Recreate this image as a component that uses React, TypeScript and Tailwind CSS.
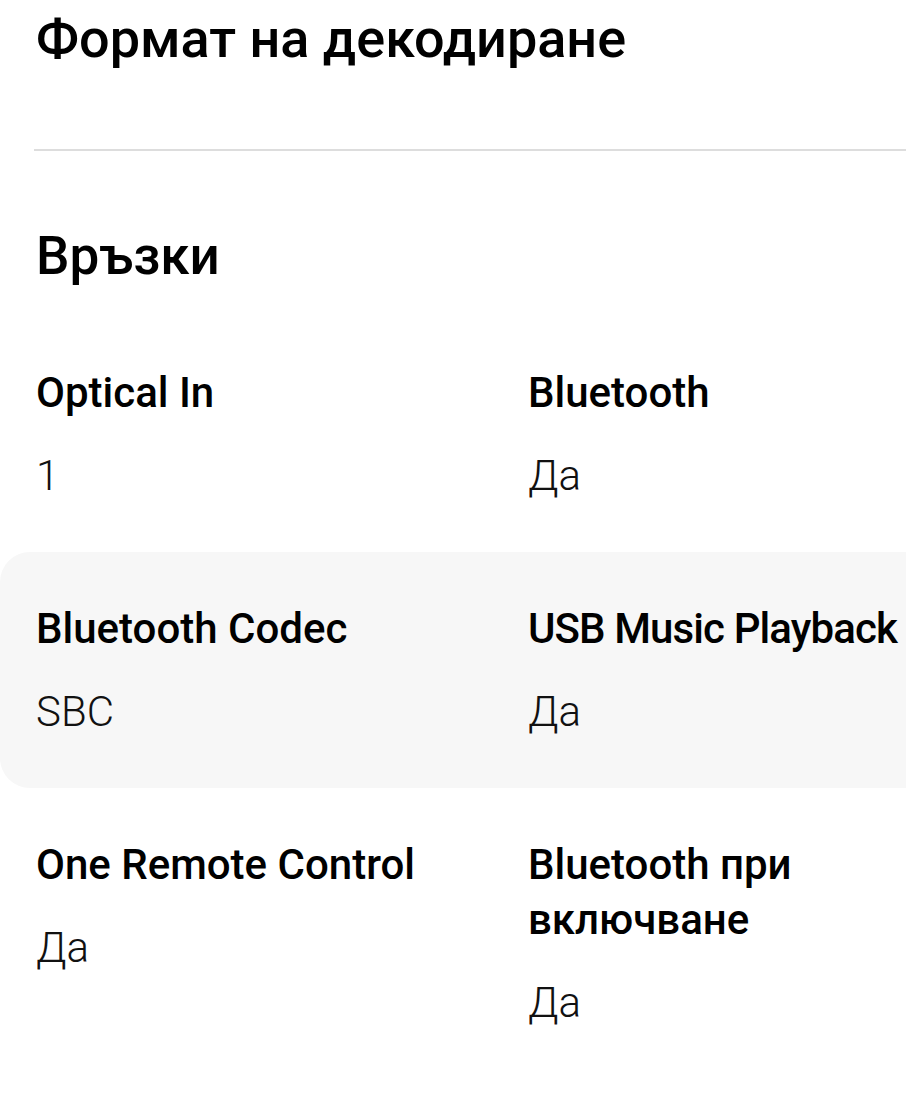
import type { ReactNode } from 'react'

type Item = { label: string; value: ReactNode; tight?: boolean }

const specs: { left: Item; right: Item; shaded?: boolean }[] = [
  { left: { label: 'Optical In', value: '1' }, right: { label: 'Bluetooth', value: 'Да' } },
  { left: { label: 'Bluetooth Codec', value: 'SBC' }, right: { label: 'USB Music Playback', value: 'Да', tight: true }, shaded: true },
  { left: { label: 'One Remote Control', value: 'Да' }, right: { label: 'Bluetooth при включване', value: 'Да' } },
]

function Spec({ label, value, tight }: Item) {
  return (
    <div className="flex flex-col">
      <span className={tight
        ? 'whitespace-nowrap text-[42px] font-medium leading-[55px] tracking-[-0.9px] text-black'
        : 'text-[42px] font-medium leading-[55px] text-black'}>{label}</span>
      <span className="mt-[28px] text-[42px] font-light leading-[55px] text-[#111]">{value}</span>
    </div>
  )
}

export default function App() {
  return (
    <div lang="bg" className="min-h-screen w-full overflow-hidden bg-white font-['Roboto',sans-serif] text-black">

      {/* ── Collapsed section ───────────────────────── */}
      <h2 className="pl-[36px] pt-[8px] text-[54px] font-medium leading-[62px]">Формат на декодиране</h2>
      <div className="ml-[34px] mt-[79px] h-[2px] bg-[#dddddd]" />

      {/* ── Connections ─────────────────────────────── */}
      <h2 className="mt-[74px] pl-[36px] text-[53px] font-medium leading-[62px]">Връзки</h2>

      <div className="mt-[29px] flex w-[940px] flex-col">
        {specs.map(row => (
          <div
            key={row.left.label}
            className={row.shaded
              ? 'grid grid-cols-[492px_400px] rounded-[30px] bg-[#f7f7f7] py-[49px] pl-[36px]'
              : 'grid grid-cols-[492px_400px] py-[49px] pl-[36px]'}
          >
            <Spec {...row.left} />
            <Spec {...row.right} />
          </div>
        ))}
      </div>
    </div>
  )
}
